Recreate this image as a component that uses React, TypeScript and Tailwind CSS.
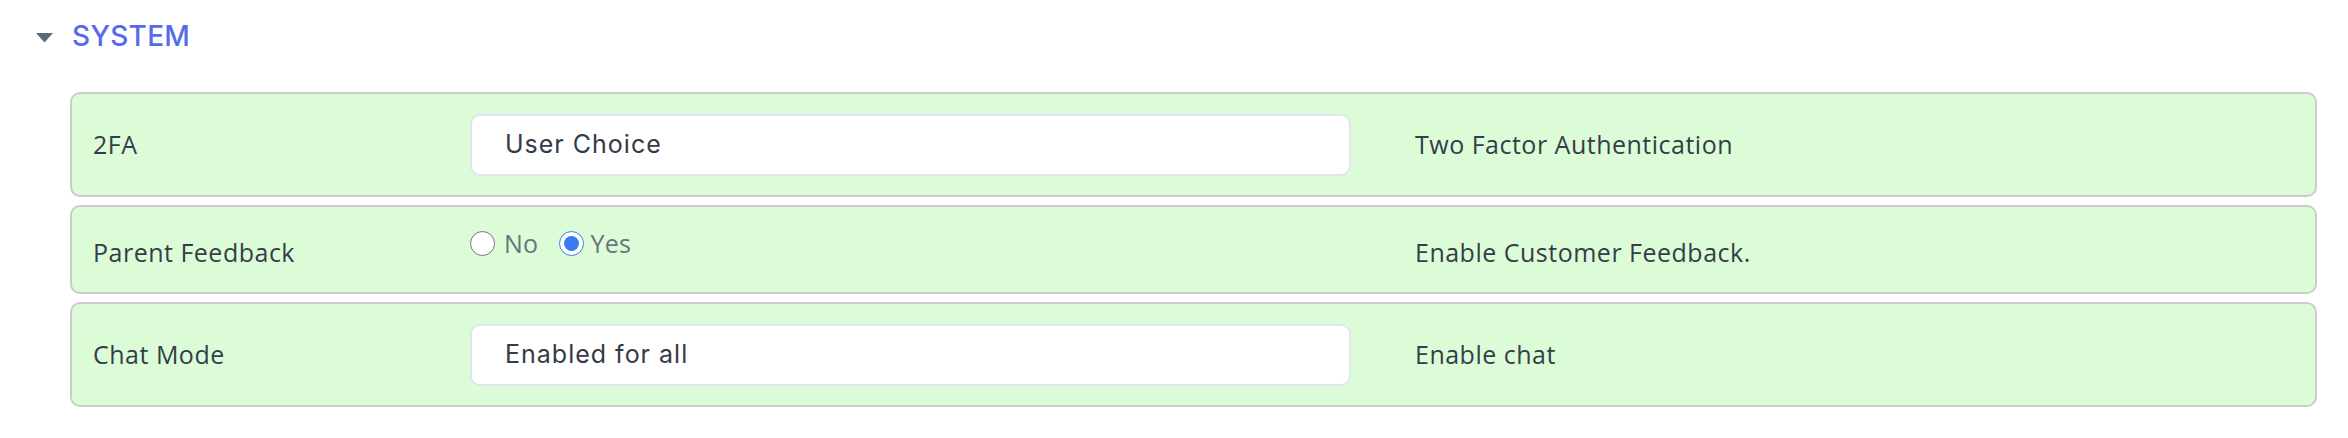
const label = "text-[25px] tracking-[0.5px] text-[#353d4a] font-['Open_Sans',sans-serif]";

function SelectBox({ value }: { value: string }) {
  return (
    <div className="w-[881px] h-[62px] bg-white border-2 border-[#dfe5f0] rounded-[10px] flex items-center pl-[33px] text-[25px] text-[#333b48] font-['Inter',sans-serif] tracking-[1px]">
      {value}
    </div>
  );
}

export default function App() {
  return (
    <div className="w-[2348px] h-[438px] bg-white">
      <div className="flex items-center h-[72px] pl-[36px]">
        <svg width="17" height="10" viewBox="0 0 17 10" className="mt-[3px]">
          <path d="M0 0 L17 0 L8.5 9.5 Z" fill="#5e6978" />
        </svg>
        <span className="ml-[19px] text-[28px] font-medium text-[#566be9] font-['Inter',sans-serif] tracking-[0.3px]">
          SYSTEM
        </span>
      </div>

      <div className="ml-[70px] mr-[31px] mt-[20px] flex flex-col gap-[8px]">
        <div className="h-[105px] bg-[#dcfcd7] border-2 border-[#cccccc] rounded-[10px] flex items-center pl-[21px]">
          <div className={`w-[377px] ${label}`}>2FA</div>
          <SelectBox value="User Choice" />
          <div className={`ml-[64px] ${label}`}>Two Factor Authentication</div>
        </div>

        <div className="h-[89px] bg-[#dcfcd7] border-2 border-[#cccccc] rounded-[10px] flex items-center pl-[21px] pt-[7px]">
          <div className={`w-[377px] ${label}`}>Parent Feedback</div>
          <div className="w-[881px] flex items-center mb-[19px] text-[25px] tracking-[0.3px] text-[#6b7380] font-['Open_Sans',sans-serif]">
            <label className="flex items-center">
              <input type="radio" name="fb" className="w-[25px] h-[25px] m-0 accent-[#3a7af4]" />
              <span className="ml-[9px]">No</span>
            </label>
            <label className="flex items-center ml-[21px]">
              <input type="radio" name="fb" defaultChecked className="w-[25px] h-[25px] m-0 accent-[#3a7af4]" />
              <span className="ml-[6px]">Yes</span>
            </label>
          </div>
          <div className={`ml-[64px] ${label}`}>Enable Customer Feedback.</div>
        </div>

        <div className="h-[105px] bg-[#dcfcd7] border-2 border-[#cccccc] rounded-[10px] flex items-center pl-[21px]">
          <div className={`w-[377px] ${label}`}>Chat Mode</div>
          <SelectBox value="Enabled for all" />
          <div className={`ml-[64px] ${label}`}>Enable chat</div>
        </div>
      </div>
    </div>
  );
}
